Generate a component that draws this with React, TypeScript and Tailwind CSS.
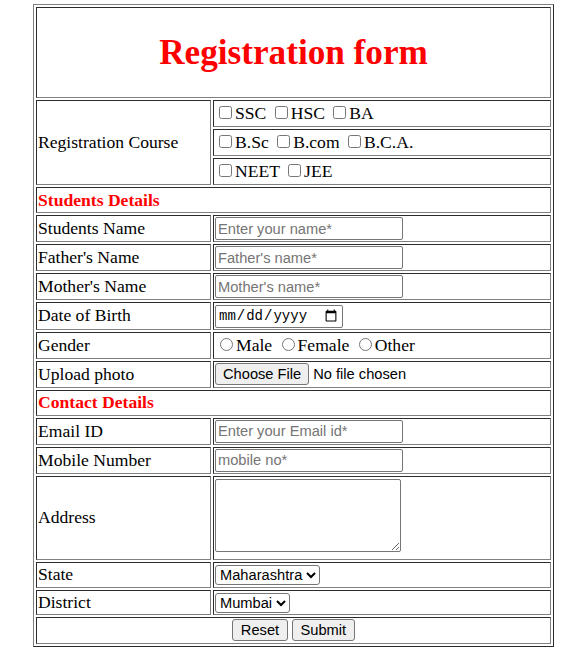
import React from 'react';

const cell = 'border border-[gray] [border-style:inset] p-px';
const textInput =
  'w-[188px] h-[23px] align-baseline border border-[#767676] rounded-[2px] px-[2px] py-px bg-white text-[14.67px] [font-family:"Liberation_Sans",Arial,sans-serif] placeholder:text-[#757575]';
const checkbox = 'm-[3px_3px_3px_4px] align-baseline';
const radio = 'm-[2px_3px_0_5px] align-baseline';
const control = 'text-[14.67px] [font-family:"Liberation_Sans",Arial,sans-serif]';
const btn =
  'bg-[#efefef] border border-[#767676] rounded-[3px] px-[7.5px] py-[2px] text-black ' + control;

const LabelRow: React.FC<{ label: string; h?: string; children: React.ReactNode }> = ({
  label,
  h = 'h-[27px]',
  children,
}) => (
  <tr>
    <td className={`${cell} ${h}`}>{label}</td>
    <td className={`${cell} ${h}`}>{children}</td>
  </tr>
);

const SectionRow: React.FC<{ title: string }> = ({ title }) => (
  <tr>
    <td colSpan={2} className={`${cell} h-[26px] font-bold text-[red]`}>
      {title}
    </td>
  </tr>
);

export default function App() {
  return (
    <div className="bg-white min-h-[655px] pt-[4px] pl-[33px] text-black">
      <form>
        <table className='w-[521px] border-separate border-spacing-[2px] border border-[gray] [border-style:outset] text-[17.6px] leading-[normal] [font-family:"Liberation_Serif","Times_New_Roman",serif]'>
          <tbody>
            <tr>
              <td colSpan={2} className={`${cell} h-[91px]`}>
                <h1 className="text-center text-[35.2px] font-bold text-[red] my-[22.8px]">Registration form</h1>
              </td>
            </tr>
            <tr>
              <td rowSpan={3} className={`${cell} w-[175px]`}>
                Registration Course
              </td>
              <td className={`${cell} h-[27px]`}>
                <input type="checkbox" className={checkbox} />SSC{' '}
                <input type="checkbox" className={checkbox} />HSC{' '}
                <input type="checkbox" className={checkbox} />BA
              </td>
            </tr>
            <tr>
              <td className={`${cell} h-[27px]`}>
                <input type="checkbox" className={checkbox} />B.Sc{' '}
                <input type="checkbox" className={checkbox} />B.com{' '}
                <input type="checkbox" className={checkbox} />B.C.A.
              </td>
            </tr>
            <tr>
              <td className={`${cell} h-[27px]`}>
                <input type="checkbox" className={checkbox} />NEET{' '}
                <input type="checkbox" className={checkbox} />JEE
              </td>
            </tr>

            <SectionRow title="Students Details" />
            <LabelRow label="Students Name">
              <input type="text" placeholder="Enter your name*" className={textInput} />
            </LabelRow>
            <LabelRow label="Father's Name">
              <input type="text" placeholder="Father's name*" className={textInput} />
            </LabelRow>
            <LabelRow label="Mother's Name">
              <input type="text" placeholder="Mother's name*" className={textInput} />
            </LabelRow>
            <LabelRow label="Date of Birth">
              <input
                type="date"
                className='w-[128px] h-[23px] border border-[#767676] rounded-[2px] px-[2px] py-px bg-white text-[14px] [font-family:"Liberation_Mono",monospace]'
              />
            </LabelRow>
            <LabelRow label="Gender">
              <input type="radio" name="gender" className={radio} />Male{' '}
              <input type="radio" name="gender" className={radio} />Female{' '}
              <input type="radio" name="gender" className={radio} />Other
            </LabelRow>
            <LabelRow label="Upload photo">
              <input
                type="file"
                className={`${control} file:bg-[#efefef] file:border file:border-solid file:border-[#767676] file:rounded-[3px] file:px-[7px] file:py-[2px] file:mr-[4px] file:text-black`}
              />
            </LabelRow>

            <SectionRow title="Contact Details" />
            <LabelRow label="Email ID">
              <input type="email" placeholder="Enter your Email id*" className={textInput} />
            </LabelRow>
            <LabelRow label="Mobile Number">
              <input type="tel" placeholder="mobile no*" className={textInput} />
            </LabelRow>
            <LabelRow label="Address" h="h-[84px]">
              <textarea className="w-[186px] h-[73px] align-baseline border border-[#767676] rounded-[2px] bg-white p-[2px]" />
            </LabelRow>
            <LabelRow label="State" h="h-[26px]">
              <select className={`${control} border border-[#767676] rounded-[3px] bg-white`} defaultValue="Maharashtra">
                <option>Maharashtra</option>
                <option>Gujarat</option>
                <option>Goa</option>
              </select>
            </LabelRow>
            <LabelRow label="District" h="h-[25px]">
              <select className={`${control} border border-[#767676] rounded-[3px] bg-white`} defaultValue="Mumbai">
                <option>Mumbai</option>
                <option>Pune</option>
                <option>Nagpur</option>
              </select>
            </LabelRow>
            <tr>
              <td colSpan={2} className={`${cell} h-[27px] text-center`}>
                <button type="reset" className={btn}>Reset</button>{' '}
                <button type="submit" className={btn}>Submit</button>
              </td>
            </tr>
          </tbody>
        </table>
      </form>
    </div>
  );
}
